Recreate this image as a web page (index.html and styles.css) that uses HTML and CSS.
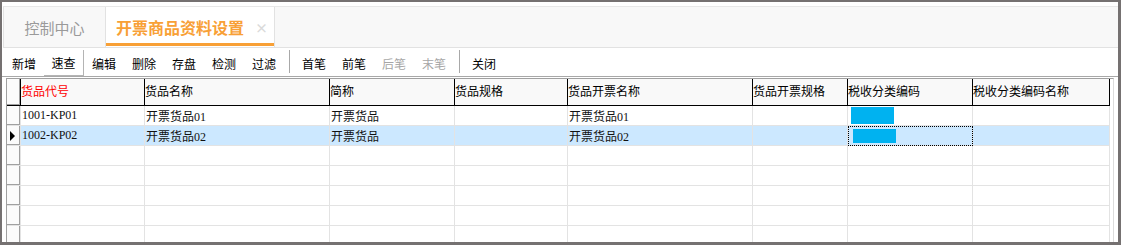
FILE: index.html
```html
<!DOCTYPE html>
<html lang="zh-CN">

<head>
    <meta charset="UTF-8">
    <meta name="viewport" content="width=device-width, initial-scale=1.0">
    <title>开票商品资料设置</title>
    <link rel="stylesheet" href="styles.css">
</head>

<body>
    <div class="frame">
        <div class="tabbar">
            <div class="tab">控制中心</div>
            <div class="tab tab-active">开票商品资料设置<span class="tab-close">×</span></div>
        </div>

        <div class="toolbar">
            <span class="tool">新增</span>
            <span class="tool tool-pressed">速查</span>
            <span class="tool">编辑</span>
            <span class="tool">删除</span>
            <span class="tool">存盘</span>
            <span class="tool">检测</span>
            <span class="tool">过滤</span>
            <span class="tool-sep"></span>
            <span class="tool">首笔</span>
            <span class="tool">前笔</span>
            <span class="tool tool-off">后笔</span>
            <span class="tool tool-off">末笔</span>
            <span class="tool-sep"></span>
            <span class="tool">关闭</span>
        </div>

        <div class="grid-area">
            <table class="grid">
                <colgroup>
                    <col class="col-ind">
                    <col class="col-code">
                    <col class="col-name">
                    <col class="col-short">
                    <col class="col-spec">
                    <col class="col-inv-name">
                    <col class="col-inv-spec">
                    <col class="col-tax">
                    <col class="col-tax-name">
                </colgroup>
                <thead>
                    <tr>
                        <th class="ind"></th>
                        <th class="key">货品代号</th>
                        <th>货品名称</th>
                        <th>简称</th>
                        <th>货品规格</th>
                        <th>货品开票名称</th>
                        <th>货品开票规格</th>
                        <th>税收分类编码</th>
                        <th>税收分类编码名称</th>
                    </tr>
                </thead>
                <tbody>
                    <tr>
                        <td class="ind"></td>
                        <td>1001-KP01</td>
                        <td>开票货品01</td>
                        <td>开票货品</td>
                        <td></td>
                        <td>开票货品01</td>
                        <td></td>
                        <td><span class="redact"></span></td>
                        <td></td>
                    </tr>
                    <tr class="selected">
                        <td class="ind"><span class="pointer"></span></td>
                        <td>1002-KP02</td>
                        <td>开票货品02</td>
                        <td>开票货品</td>
                        <td></td>
                        <td>开票货品02</td>
                        <td></td>
                        <td class="focus"><span class="redact redact-sel"></span></td>
                        <td></td>
                    </tr>
                    <tr><td class="ind"></td><td></td><td></td><td></td><td></td><td></td><td></td><td></td><td></td></tr>
                    <tr><td class="ind"></td><td></td><td></td><td></td><td></td><td></td><td></td><td></td><td></td></tr>
                    <tr><td class="ind"></td><td></td><td></td><td></td><td></td><td></td><td></td><td></td><td></td></tr>
                    <tr><td class="ind"></td><td></td><td></td><td></td><td></td><td></td><td></td><td></td><td></td></tr>
                    <tr><td class="ind"></td><td></td><td></td><td></td><td></td><td></td><td></td><td></td><td></td></tr>
                </tbody>
            </table>
        </div>
    </div>
</body>

</html>
```

FILE: styles.css
```css
body,
html {
    margin: 0px;
    background-color: #fff;
    font-family: "Noto Sans CJK SC", sans-serif;
}

.frame {
    display: flex;
    flex-direction: column;
    height: 245px;
    box-sizing: border-box;
    border: 2px solid #757171;
    border-right-width: 3px;
    border-bottom-width: 3px;
    overflow: hidden;
}

/* tabs */
.tabbar {
    display: flex;
    flex: none;
    height: 40px;
    margin: 4px 0 0 1px;
    border-top: 1px solid #e8e8e8;
    border-bottom: 1px solid #e2e2e2;
    border-left: 1px solid #e2e2e2;
    background-color: #f8f8f8;
}

.tab {
    display: flex;
    align-items: center;
    justify-content: center;
    width: 102px;
    box-sizing: border-box;
    border-right: 1px solid #e2e2e2;
    font-size: 15px;
    color: #9a9a9a;
}

.tab-active {
    position: relative;
    width: 169px;
    justify-content: flex-start;
    padding-left: 10px;
    background-color: #fff;
    font-size: 16px;
    font-weight: bold;
    color: #f8a036;
}

.tab-active::after {
    content: "";
    position: absolute;
    left: 0;
    right: 0;
    bottom: 1px;
    height: 3px;
    background-color: #f8a036;
}

.tab-close {
    margin-left: auto;
    margin-right: 6px;
    font-size: 13px;
    color: #dadada;
}

/* toolbar */
.toolbar {
    display: flex;
    flex: none;
    align-items: flex-start;
    height: 28px;
    padding-left: 2px;
    border-bottom: 1px solid #a8a8a8;
}

.tool {
    display: flex;
    align-items: center;
    justify-content: center;
    width: 40px;
    height: 26px;
    margin-top: 2px;
    box-sizing: border-box;
    font-size: 12px;
    color: #000;
}

.tool-pressed {
    border-right: 1px solid #b4b4b4;
    border-bottom: 1px solid #b4b4b4;
}

.tool-off {
    color: #a6a6a6;
}

.tool-sep {
    width: 1px;
    height: 23px;
    margin: 2px 4px 0 5px;
    background-color: #a8a8a8;
}

/* data grid */
.grid-area {
    flex: 1;
    margin: 1px 4px 0 4px;
    border-top: 1px solid #a0a0a0;
    border-left: 1px solid #a0a0a0;
    border-right: 1px solid #dcdcdc;
    overflow: hidden;
}

.grid {
    table-layout: fixed;
    width: 1103px;
    border-collapse: separate;
    border-spacing: 0;
    font-size: 12px;
}

.col-ind { width: 14px; }
.col-code { width: 124px; }
.col-name { width: 185px; }
.col-short { width: 125px; }
.col-spec { width: 113px; }
.col-inv-name { width: 185px; }
.col-inv-spec { width: 95px; }
.col-tax { width: 125px; }
.col-tax-name { width: 137px; }

.grid thead tr {
    height: 27px;
}

.grid tbody tr {
    height: 20px;
}

.grid th {
    padding: 0 0 3px 0;
    border-right: 1px solid #000;
    border-bottom: 1px solid #000;
    background-color: #f9f9f9;
    text-align: left;
    font-weight: normal;
    color: #000;
    white-space: nowrap;
    overflow: hidden;
}

.grid th.key {
    color: #f00;
}

.grid td {
    padding: 0 0 0 1px;
    border-right: 1px solid #e3e3e3;
    border-bottom: 1px solid #e3e3e3;
    font-family: "Liberation Serif", "Noto Sans CJK SC", serif;
    color: #111;
    white-space: nowrap;
    overflow: hidden;
}

.grid .ind {
    padding: 0;
    background-color: #fbfbfb;
    box-shadow: inset -1px -1px 0 #a0a0a0;
}

.selected td {
    background-color: #cce8ff;
}

.selected td.ind {
    background-color: #fbfbfb;
}

.pointer {
    display: block;
    width: 0;
    height: 0;
    margin-left: 3px;
    border-left: 5px solid #000;
    border-top: 5px solid transparent;
    border-bottom: 5px solid transparent;
}

.redact {
    display: inline-block;
    width: 43px;
    height: 17px;
    margin-left: 2px;
    vertical-align: middle;
    background-color: #00b2f0;
}

.redact-sel {
    height: 14px;
    margin-left: 4px;
}

.focus {
    outline: 1px dotted #000;
    outline-offset: -1px;
}
```
